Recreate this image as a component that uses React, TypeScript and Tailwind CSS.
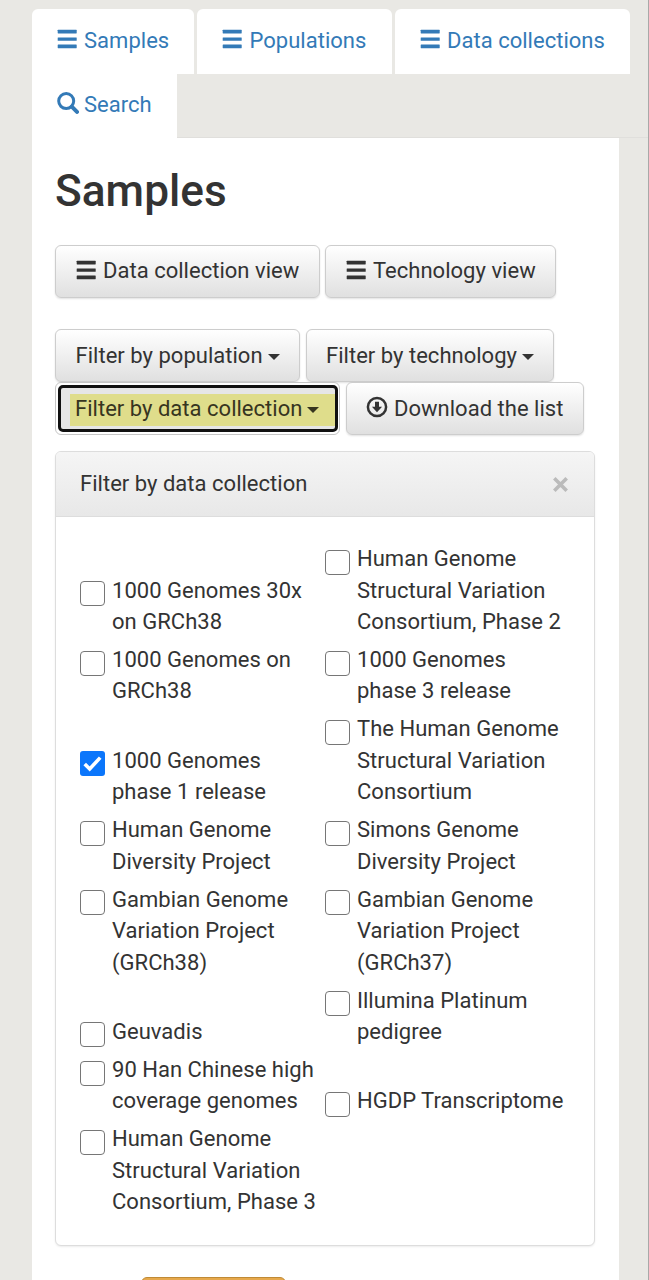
import type { ReactNode } from 'react';

function MenuIcon() {
  return (
    <svg width="20" height="20" viewBox="0 0 20 20" className="mb-[3px] shrink-0" fill="currentColor">
      <rect x="0.7" y="0.8" width="19" height="3.6" rx="0.4" />
      <rect x="0.7" y="8.4" width="19" height="3.4" rx="0.4" />
      <rect x="0.7" y="15.6" width="19" height="3.6" rx="0.4" />
    </svg>
  );
}

function SearchIcon() {
  return (
    <svg width="22" height="22" viewBox="0 0 22 22" className="mb-[3px] shrink-0" fill="none" stroke="currentColor">
      <circle cx="9.2" cy="9.1" r="7.5" strokeWidth="3" />
      <path d="M14.8 14.7 20 19.9" strokeWidth="4" strokeLinecap="round" />
    </svg>
  );
}

function DownloadIcon() {
  return (
    <svg width="22" height="22" viewBox="0 0 22 22" className="mb-[3px] shrink-0" fill="none" stroke="currentColor">
      <circle cx="11" cy="11" r="9.1" strokeWidth="2.5" />
      <path d="M9 5.7h4v5.1h3.1L11 16.2l-5.1-5.4H9z" fill="currentColor" stroke="none" />
    </svg>
  );
}

function Caret() {
  return (
    <svg width="12" height="6" viewBox="0 0 12 6" className="mt-[2px] ml-[5px] shrink-0" fill="currentColor">
      <path d="M0 0h12L6 6z" />
    </svg>
  );
}

function Tab({ icon, children, className }: { icon: ReactNode; children: ReactNode; className: string }) {
  return (
    <a className={`flex items-center bg-white pl-[25px] text-[#337ab7] ${className}`}>
      {icon}
      <span>{children}</span>
    </a>
  );
}

function Button({ children, className }: { children: ReactNode; className: string }) {
  return (
    <button
      className={`flex h-[53px] shrink-0 items-center rounded-[6px] border border-[#cdcdcd] bg-linear-to-b from-white to-[#e0e0e0] text-left shadow-[0_1px_2px_rgba(0,0,0,0.12)] ${className}`}
    >
      {children}
    </button>
  );
}

type Option = { lines: string[]; checked?: boolean };

const options: Option[] = [
  { lines: ['1000 Genomes 30x', 'on GRCh38'] },
  { lines: ['Human Genome', 'Structural Variation', 'Consortium, Phase 2'] },
  { lines: ['1000 Genomes on', 'GRCh38'] },
  { lines: ['1000 Genomes', 'phase 3 release'] },
  { lines: ['1000 Genomes', 'phase 1 release'], checked: true },
  { lines: ['The Human Genome', 'Structural Variation', 'Consortium'] },
  { lines: ['Human Genome', 'Diversity Project'] },
  { lines: ['Simons Genome', 'Diversity Project'] },
  { lines: ['Gambian Genome', 'Variation Project', '(GRCh38)'] },
  { lines: ['Gambian Genome', 'Variation Project', '(GRCh37)'] },
  { lines: ['Geuvadis'] },
  { lines: ['Illumina Platinum', 'pedigree'] },
  { lines: ['90 Han Chinese high', 'coverage genomes'] },
  { lines: ['HGDP Transcriptome'] },
  { lines: ['Human Genome', 'Structural Variation', 'Consortium, Phase 3'] },
];

function CheckOption({ option }: { option: Option }) {
  return (
    <label className="flex items-start gap-[7px]">
      {option.checked ? (
        <span className="mt-[6.5px] flex size-[25px] shrink-0 items-center justify-center rounded-[3px] bg-[#0b76fb]">
          <svg width="19" height="19" viewBox="0 0 19 19" fill="none" stroke="white" strokeWidth="3.6">
            <path d="M1.7 9.9 6.7 15 17.2 3.6" />
          </svg>
        </span>
      ) : (
        <span className="mt-[6.5px] size-[25px] shrink-0 rounded-[4px] border-[1.5px] border-[#767676] bg-white" />
      )}
      <span>
        {option.lines.map((line) => (
          <span key={line} className="block whitespace-nowrap">
            {line}
          </span>
        ))}
      </span>
    </label>
  );
}

export default function App() {
  return (
    <div className="h-[1280px] w-[649px] overflow-hidden border-r border-[#a9a9a8] bg-[#e9e8e4] font-[Roboto,sans-serif] text-[22px] leading-[31.43px] tracking-[0.02px] text-[#333]">
      <nav className="ml-[32px] border-b border-[#e0dfdc] pt-[9px]">
        <div className="flex gap-[3px]">
          <Tab icon={<MenuIcon />} className="h-[65px] w-[162px] gap-[7px] rounded-t-[6px] pb-[2px]">Samples</Tab>
          <Tab icon={<MenuIcon />} className="h-[65px] w-[194.5px] gap-[7.5px] rounded-t-[6px] pb-[2px]">Populations</Tab>
          <Tab icon={<MenuIcon />} className="h-[65px] w-[235.5px] gap-[7.5px] rounded-t-[6px] pb-[2px]">Data collections</Tab>
        </div>
        <Tab icon={<SearchIcon />} className="-mb-px h-[64px] w-[145px] gap-[5px] pb-[3px]">Search</Tab>
      </nav>

      <main className="ml-[32px] h-[1142px] w-[587px] bg-white px-[23px] pt-[28px]">
        <h1 className="h-[50px] text-[44.2px] leading-[51px] font-medium">Samples</h1>

        <div className="mt-[29px] flex gap-[5px]">
          <Button className="w-[265px] gap-[7px] pb-px pl-[20px]">
            <MenuIcon />
            <span>Data collection view</span>
          </Button>
          <Button className="w-[231px] gap-[7px] pb-px pl-[20px]">
            <MenuIcon />
            <span>Technology view</span>
          </Button>
        </div>

        <div className="mt-[31px] flex gap-[6px]">
          <Button className="w-[245px] pl-[19.5px]">
            <span>Filter by population</span>
            <Caret />
          </Button>
          <Button className="w-[248px] pl-[19px]">
            <span>Filter by technology</span>
            <Caret />
          </Button>
        </div>
        <div className="flex gap-[6px]">
          <div className="h-[53px] w-[285px] rounded-[6px] border border-[#c6c6c6] bg-white p-[2px]">
            <button className="flex h-[47px] w-[280px] items-center rounded-[5px] border-[3px] border-[#111] bg-[#e6e6e6] pl-[9px] text-left">
              <span className="mt-[3px] flex h-[32px] w-[265px] items-center bg-[#dfdd8b] pb-[3px] pl-[5px] text-[#37351f]">
                <span>Filter by data collection</span>
                <Caret />
              </span>
            </button>
          </div>
          <Button className="w-[238px] gap-[6px] pl-[19px]">
            <DownloadIcon />
            <span>Download the list</span>
          </Button>
        </div>

        <section className="mt-[16px] h-[795px] w-[540px] rounded-[6px] border-[1.5px] border-[#ddd] bg-white shadow-[0_1px_2px_rgba(0,0,0,0.08)]">
          <header className="flex h-[65px] items-center justify-between rounded-t-[5px] border-b border-[#ddd] bg-linear-to-b from-[#f5f5f5] to-[#e8e8e8] pr-[26px] pl-[24px]">
            <span>Filter by data collection</span>
            <svg width="15" height="15" viewBox="0 0 15 15" stroke="#bbb" strokeWidth="3.6">
              <path d="M1.3 1.3 13.7 13.7M13.7 1.3 1.3 13.7" />
            </svg>
          </header>
          <div className="grid grid-cols-[245px_245px] items-end gap-y-[6.55px] pt-[26.2px] pl-[24px]">
            {options.map((option, i) => (
              <CheckOption key={i} option={option} />
            ))}
          </div>
        </section>

        <div className="mt-[31px] ml-[86px] h-[50px] w-[145px] rounded-[6px] border border-[#c08a35] bg-[#e6a84c]" />
      </main>
    </div>
  );
}
